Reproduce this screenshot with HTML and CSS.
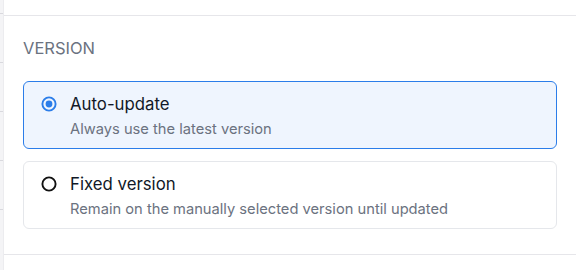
FILE: index.html
```html
<!DOCTYPE html>
<html>
<head>
<meta charset="utf-8">
<link rel="stylesheet" href="styles.css">
</head>
<body>
<div class="rail">
  <div class="rail-row"></div><div class="rail-row"></div><div class="rail-row"></div>
  <div class="rail-row"></div><div class="rail-row"></div>
</div>
<main class="main">
  <section class="section">
    <div class="label">VERSION</div>
    <div class="options">
      <label class="option option-selected">
        <svg class="radio" width="16" height="16" viewBox="0 0 16 16"><circle cx="8" cy="8" r="6.6" fill="none" stroke="#2b7de9" stroke-width="1.9"/><circle cx="8" cy="8" r="3.4" fill="#2b7de9"/></svg>
        <span class="texts">
          <span class="title">Auto-update</span>
          <span class="desc">Always use the latest version</span>
        </span>
      </label>
      <label class="option">
        <svg class="radio" width="16" height="16" viewBox="0 0 16 16"><circle cx="8" cy="8" r="6.6" fill="none" stroke="#111111" stroke-width="1.9"/></svg>
        <span class="texts">
          <span class="title">Fixed version</span>
          <span class="desc">Remain on the manually selected version until updated</span>
        </span>
      </label>
    </div>
  </section>
</main>
</body>
</html>
```

FILE: styles.css
```css
html, body {
  margin: 0;
  padding: 0;
  background: #ffffff;
}
body {
  display: flex;
  height: 270px;
  overflow: hidden;
  font-family: Inter, "Liberation Sans", sans-serif;
}
.rail {
  width: 3px;
  background: #f4f4f6;
  border-right: 1px solid #ececef;
  padding-top: 13px;
  display: flex;
  flex-direction: column;
  flex-shrink: 0;
  overflow: hidden;
}
.rail-row {
  height: 48px;
  border-top: 1px solid #d9d9de;
  flex-shrink: 0;
}
.main {
  flex: 1;
  padding-top: 15px;
}
.section {
  border-top: 1px solid #e6e6ea;
  border-bottom: 1px solid #e6e6ea;
  padding: 22px 19px 25px 19px;
}
.label {
  font-size: 16.5px;
  line-height: 20px;
  color: #6b7280;
  margin-bottom: 23px;
}
.options {
  display: flex;
  flex-direction: column;
  gap: 12px;
}
.option {
  display: flex;
  align-items: flex-start;
  gap: 13px;
  padding: 11px 16px 9px 17px;
  border: 1px solid #e5e7eb;
  border-radius: 6px;
  background: #ffffff;
}
.option-selected {
  border-color: #2b7de9;
  background: #eff5fe;
}
.radio {
  flex-shrink: 0;
  margin-top: 3px;
}
.texts {
  display: flex;
  flex-direction: column;
  gap: 4px;
}
.title {
  font-size: 16.8px;
  line-height: 22px;
  color: #111827;
}
.desc {
  font-size: 14.7px;
  line-height: 20px;
  color: #6b7280;
}
```
